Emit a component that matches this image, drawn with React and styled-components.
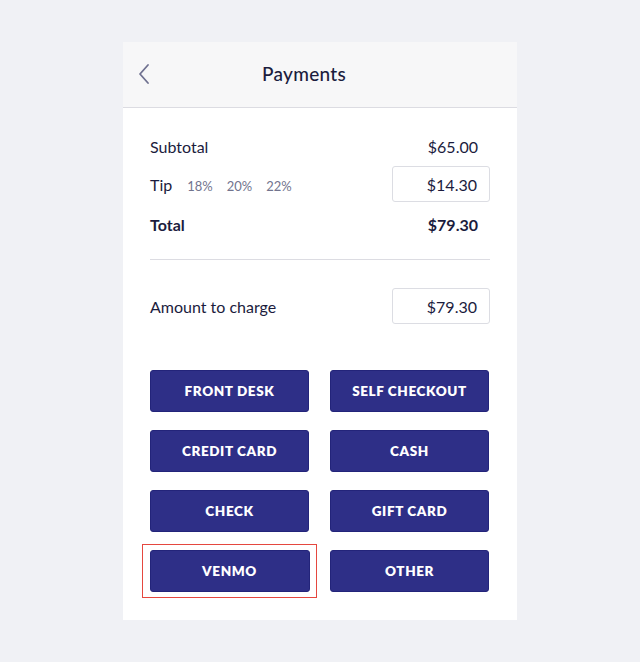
import React, { useState } from 'react';
import styled, { createGlobalStyle } from 'styled-components';

const Global = createGlobalStyle`
  html, body {
    margin: 0;
    padding: 0;
    background: #f0f1f5;
    font-family: Lato, "Noto Sans", sans-serif;
    color: #1b1c3d;
  }
`;

const Page = styled.div`
  width: 640px;
  height: 662px;
  display: flex;
  justify-content: center;
  padding-top: 42px;
  box-sizing: border-box;
`;

const Card = styled.div`
  width: 394px;
  height: 578px;
  background: #ffffff;
  display: flex;
  flex-direction: column;
`;

const Header = styled.div`
  height: 65px;
  background: #f7f7f8;
  border-bottom: 1px solid #dcdce2;
  display: grid;
  grid-template-columns: 50px 1fr 82px;
  align-items: center;
  h1 {
    margin: 0 0 3px;
    font-size: 19px;
    font-weight: 500;
    text-align: center;
    letter-spacing: 0.3px;
  }
`;

const Back = styled.button`
  border: none;
  background: none;
  padding: 0 0 2px 14px;
  display: flex;
  align-items: center;
  cursor: pointer;
`;

const Body = styled.div`
  padding: 19px 27px 0;
  display: flex;
  flex-direction: column;
`;

const Row = styled.div`
  display: flex;
  align-items: center;
  justify-content: space-between;
  height: ${p => p.h || 38}px;
  font-size: 16px;
  font-weight: ${p => (p.bold ? 700 : 400)};
`;

const Value = styled.span`
  padding-right: 12px;
`;

const Field = styled.div`
  width: 98px;
  height: 36px;
  box-sizing: border-box;
  border: 1px solid #dcdde3;
  border-radius: 3px;
  display: flex;
  align-items: center;
  justify-content: flex-end;
  padding-right: 12px;
  font-size: 16px;
`;

const Tip = styled.div`
  display: flex;
  align-items: baseline;
  gap: 14px;
  span {
    font-size: 13px;
    color: #72748e;
    cursor: pointer;
  }
  span:first-child {
    font-size: 16px;
    color: #1b1c3d;
    margin-right: 1px;
  }
`;

const Divider = styled.hr`
  border: none;
  border-top: 1px solid #dcdce2;
  margin: 14px 0 28px;
`;

const Grid = styled.div`
  display: grid;
  grid-template-columns: 159px 159px;
  column-gap: 21px;
  row-gap: 18px;
  margin-top: 46px;
`;

const Method = styled.button`
  height: 42px;
  background: #2e2f87;
  border: 1px solid #23247a;
  border-radius: 3px;
  color: #ffffff;
  font-family: Lato, "Noto Sans", sans-serif;
  font-size: 13.5px;
  font-weight: 800;
  letter-spacing: 0.6px;
  cursor: pointer;
`;

const Selected = styled.div`
  margin: -6px -8px;
  padding: 4.5px 6.5px;
  border: 1.5px solid #e5473f;
  display: flex;
  button { flex: 1; }
`;

const methods = ['FRONT DESK', 'SELF CHECKOUT', 'CREDIT CARD', 'CASH', 'CHECK', 'GIFT CARD', 'VENMO', 'OTHER'];

export default function App() {
  const [picked, setPicked] = useState('VENMO');
  return (
    <Page>
      <Global />
      <Card>
        <Header>
          <Back aria-label="Back">
            <svg width="14" height="22" viewBox="0 0 14 22" fill="none">
              <path d="M11 2 L3 11 L11 20" stroke="#6f7190" strokeWidth="1.8" strokeLinecap="round" strokeLinejoin="round" />
            </svg>
          </Back>
          <h1>Payments</h1>
          <div />
        </Header>
        <Body>
          <Row h={38}>
            <span>Subtotal</span>
            <Value>$65.00</Value>
          </Row>
          <Row h={38}>
            <Tip><span>Tip</span><span>18%</span><span>20%</span><span>22%</span></Tip>
            <Field>$14.30</Field>
          </Row>
          <Row h={42} bold>
            <span>Total</span>
            <Value>$79.30</Value>
          </Row>
          <Divider />
          <Row h={36}>
            <span>Amount to charge</span>
            <Field>$79.30</Field>
          </Row>
          <Grid>
            {methods.map(m =>
              m === picked ? (
                <Selected key={m}><Method onClick={() => setPicked(m)}>{m}</Method></Selected>
              ) : (
                <Method key={m} onClick={() => setPicked(m)}>{m}</Method>
              )
            )}
          </Grid>
        </Body>
      </Card>
    </Page>
  );
}
